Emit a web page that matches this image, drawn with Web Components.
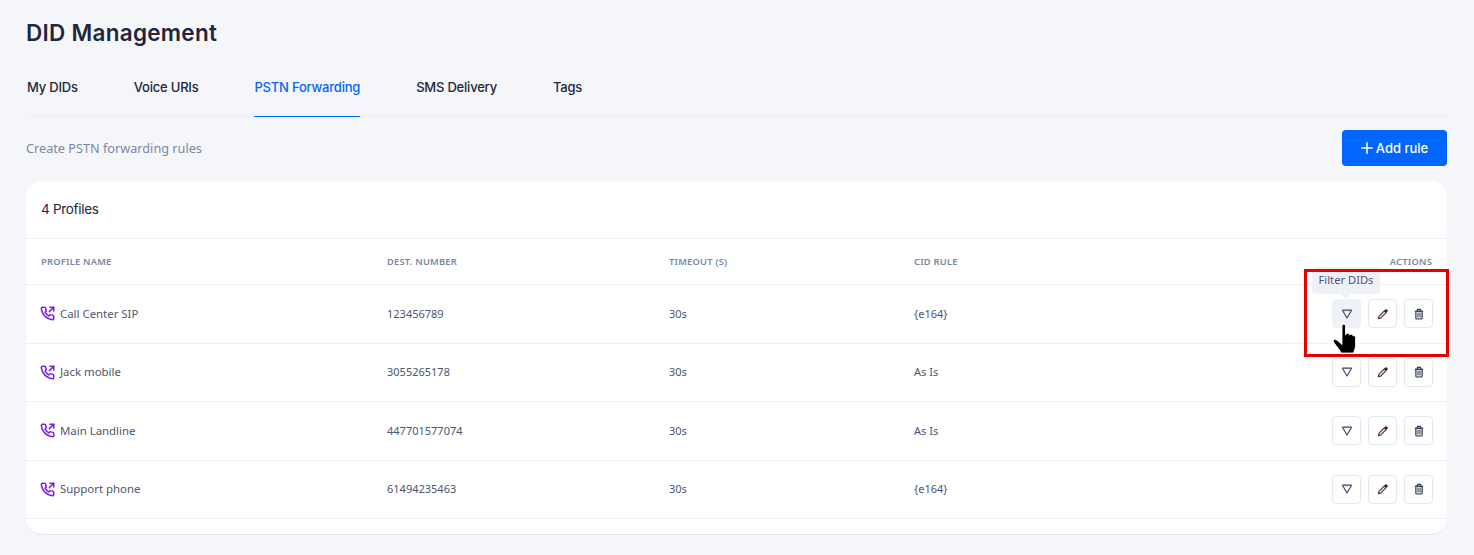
<!DOCTYPE html>
<html>
<head>
<meta charset="utf-8">
<title>DID Management</title>
<style>
html, body { margin: 0; padding: 0; background: #f5f6fa; }
body { font-family: "Noto Sans", sans-serif; width: 1474px; height: 555px; overflow: hidden; }
</style>
</head>
<body>
<did-page></did-page>

<script>
const ICONS = {
	call: `<svg width="15" height="15" viewBox="0 0 24 24" fill="none" stroke="#7c22e8" stroke-width="2.5" stroke-linecap="round" stroke-linejoin="round"><path d="M15 9l7-7"/><path d="M16 2h6v6"/><path d="M22 16.9v3a2 2 0 0 1-2.2 2 19.8 19.8 0 0 1-8.6-3.1 19.5 19.5 0 0 1-6-6A19.8 19.8 0 0 1 2.1 4.2 2 2 0 0 1 4.1 2h3a2 2 0 0 1 2 1.7c.1 1 .4 1.9.7 2.8a2 2 0 0 1-.5 2.1L8.1 9.9a16 16 0 0 0 6 6l1.3-1.3a2 2 0 0 1 2.1-.4c.9.3 1.8.6 2.8.7a2 2 0 0 1 1.7 2z"/></svg>`,
	filter: `<svg width="12" height="12" viewBox="0 0 12 12" fill="none" stroke="#3a4158" stroke-width="1.1" stroke-linejoin="round"><path d="M1.4 2.200h9.200L6 10z"/><path d="M1.600 2.300h8.800" stroke="#6b7285" stroke-width="1.600"/></svg>`,
	edit: `<svg width="12" height="12" viewBox="0 0 12 12"><path d="M1.400 10.600l.5-2.300 5.400-5.400 1.800 1.800-5.400 5.400z" fill="#eef0f5" stroke="#5a3040" stroke-width="1.200" stroke-linejoin="round"/><path d="M7.300 2.700l1.200-1.200a.9.9 0 0 1 1.300 0l.7.7a.9.9 0 0 1 0 1.300L9.300 4.700z" fill="#1c2540"/></svg>`,
	trash: `<svg width="12" height="12" viewBox="0 0 12 12" fill="none" stroke="#3a3f50" stroke-width="1.100" stroke-linejoin="round"><path d="M2.800 3.200h6.400v7a.8.8 0 0 1-.8.8H3.600a.8.8 0 0 1-.8-.8z" fill="#c9d3dc"/><path d="M1.800 3.200h8.400"/><path d="M4.400 3V1.400h3.200V3"/><path d="M5 5v4M7 5v4" stroke-width=".8"/></svg>`,
	hand: `<svg width="26" height="31" viewBox="0 0 26 31"><path d="M10 2.500c0-1.500 3.500-1.500 3.500 0V12l.5-1c.5-1 3-1 3.300.5l.2.5c.5-1 3-1 3.300.5l.2.5c.5-.6 2.500-.5 2.500 1.500V22c0 3-1 5-2 8H9C8 27 5 24 1.500 19c-1-1.500.5-3 2-2.500 2 .6 4.500 3.500 6.500 5z" fill="#000" stroke="#fff" stroke-width=".8"/></svg>`
};

class IconButton extends HTMLElement {
	connectedCallback() {
		const hover = this.hasAttribute('hover');
		this.attachShadow({ mode: 'open' });
		this.shadowRoot.innerHTML = `
		<style>
		:host { display: block; }
		.btn {
			width: 29px;
			height: 29px;
			box-sizing: border-box;
			border: 1px solid ${hover ? '#eef2f7' : '#e4e9f1'};
			border-radius: 4px;
			background: ${hover ? '#eef2f7' : '#fff'};
			display: flex;
			align-items: center;
			justify-content: center;
		}
		</style>
		<div class="btn">${ICONS[this.getAttribute('icon')]}</div>`;
	}
}

class ProfileRow extends HTMLElement {
	connectedCallback() {
		const hover = this.hasAttribute('hover') ? 'hover' : '';
		this.attachShadow({ mode: 'open' });
		this.shadowRoot.innerHTML = `
		<style>
		:host {
			display: grid;
			grid-template-columns: 346px 282px 245px 1fr;
			align-items: center;
			padding: 0 14px 1px 15px;
			border-bottom: 1px solid #edf0f5;
			font-size: 11px;
			line-height: 16px;
			color: #4d5670;
		}
		.name { display: flex; align-items: center; gap: 5.5px; margin-left: -1.5px; font-size: 11.4px; }
		.name svg { display: block; }
		.rest { display: flex; justify-content: space-between; align-items: center; }
		.actions { display: flex; justify-content: flex-end; gap: 7px; }
		</style>
		<div class="name">${ICONS.call}<span>${this.getAttribute('name')}</span></div>
		<div>${this.getAttribute('dest')}</div>
		<div>${this.getAttribute('timeout')}</div>
		<div class="rest">
			<span>${this.getAttribute('cid')}</span>
			<div class="actions">
				<icon-button icon="filter" ${hover}></icon-button>
				<icon-button icon="edit"></icon-button>
				<icon-button icon="trash"></icon-button>
			</div>
		</div>`;
	}
}

class ProfileTable extends HTMLElement {
	connectedCallback() {
		this.attachShadow({ mode: 'open' });
		this.shadowRoot.innerHTML = `
		<style>
		:host {
			display: block;
			height: 354px;
			box-sizing: border-box;
			background: #fff;
			border-radius: 16px;
			border-bottom: 1px solid #e2e6ee;
		}
		.count {
			height: 58px;
			box-sizing: border-box;
			padding: 0 15px 1px 15px;
			display: flex;
			align-items: center;
			font-family: "Inter", sans-serif;
			font-size: 13.5px;
			letter-spacing: -0.3px;
			color: #23263a;
			border-bottom: 1px solid #edf0f5;
		}
		.head {
			height: 46px;
			box-sizing: border-box;
			display: grid;
			grid-template-columns: 346px 282px 245px 1fr auto;
			align-items: center;
			padding: 0 15px;
			border-bottom: 1px solid #edf0f5;
			font-size: 9.4px;
			font-weight: 600;
			letter-spacing: 0.2px;
			color: #7b87a3;
		}
		.rows { display: grid; grid-template-rows: 59px 58px 59px 58px; }
		</style>
		<div class="count">4 Profiles</div>
		<div class="head">
			<span>PROFILE NAME</span><span>DEST. NUMBER</span><span>TIMEOUT (S)</span><span>CID RULE</span><span>ACTIONS</span>
		</div>
		<div class="rows"><slot></slot></div>`;
	}
}

class DidTabs extends HTMLElement {
	connectedCallback() {
		const tabs = ['My DIDs', 'Voice URIs', 'PSTN Forwarding', 'SMS Delivery', 'Tags'];
		const active = this.getAttribute('active');
		this.attachShadow({ mode: 'open' });
		this.shadowRoot.innerHTML = `
		<style>
		:host {
			display: flex;
			gap: 56px;
			height: 49px;
			box-sizing: border-box;
			padding-left: 1px;
			border-bottom: 1px solid #edeff4;
			font-family: "Inter", sans-serif;
			font-size: 13px;
			font-weight: 500;
			color: #23263a;
		}
		.tab { height: 49px; box-sizing: border-box; padding-top: 11px; white-space: nowrap; letter-spacing: -0.21px; }
		.tab.on { color: #0066ff; border-bottom: 1.5px solid #0066ff; }
		</style>
		${tabs.map(t => `<div class="tab ${t === active ? 'on' : ''}">${t}</div>`).join('')}`;
	}
}

class DidPage extends HTMLElement {
	connectedCallback() {
		this.attachShadow({ mode: 'open' });
		this.shadowRoot.innerHTML = `
		<style>
		:host {
			display: block;
			position: relative;
			box-sizing: border-box;
			width: 1474px;
			height: 555px;
			padding: 18px 27px 0 26px;
		}
		h1 {
			margin: 0 0 22px;
			height: 28px;
			line-height: 29px;
			font-family: "Inter", sans-serif;
			font-size: 22.5px;
			font-weight: 600;
			letter-spacing: 0.27px;
			color: #23263a;
		}
		.bar {
			height: 36px;
			margin: 13px 0 15px;
			display: flex;
			align-items: center;
			justify-content: space-between;
			font-size: 12.7px;
			color: #7b87a3;
		}
		.add {
			width: 105px;
			height: 36px;
			border-radius: 4px;
			background: #0066ff;
			color: #fff;
			display: flex;
			align-items: center;
			justify-content: center;
			gap: 3px;
			font-family: "Inter", sans-serif;
			font-size: 13px;
			font-weight: 500;
		}
		.tip {
			position: absolute;
			left: 1312px;
			top: 267px;
			width: 68px;
			height: 27px;
			box-sizing: border-box;
			background: #eef2f7;
			border-radius: 4px;
			font-size: 11.2px;
			line-height: 26px;
			text-align: center;
			color: #4d5670;
		}
		.tip::after {
			content: "";
			position: absolute;
			left: 29px;
			top: 27px;
			border: 5px solid transparent;
			border-top-color: #eef2f7;
			border-bottom: 0;
		}
		.mark {
			position: absolute;
			left: 1304px;
			top: 269px;
			width: 145px;
			height: 88px;
			box-sizing: border-box;
			border: 3px solid #e60000;
		}
		.hand { position: absolute; left: 1332px; top: 323px; display: block; }
		</style>
		<h1>DID Management</h1>
		<did-tabs active="PSTN Forwarding"></did-tabs>
		<div class="bar">
			<span>Create PSTN forwarding rules</span>
			<div class="add"><svg width="12" height="12" viewBox="0 0 12 12" stroke="#fff" stroke-width="1.5" stroke-linecap="round"><path d="M6 .8v10.400M.8 6h10.400"/></svg>Add rule</div>
		</div>
		<profile-table>
			<profile-row hover name="Call Center SIP" dest="123456789" timeout="30s" cid="{e164}"></profile-row>
			<profile-row name="Jack mobile" dest="3055265178" timeout="30s" cid="As Is"></profile-row>
			<profile-row name="Main Landline" dest="447701577074" timeout="30s" cid="As Is"></profile-row>
			<profile-row name="Support phone" dest="61494235463" timeout="30s" cid="{e164}"></profile-row>
		</profile-table>
		<div class="tip">Filter DIDs</div>
		<div class="mark"></div>
		<div class="hand">${ICONS.hand}</div>`;
	}
}

customElements.define('icon-button', IconButton);
customElements.define('profile-row', ProfileRow);
customElements.define('profile-table', ProfileTable);
customElements.define('did-tabs', DidTabs);
customElements.define('did-page', DidPage);
</script>
</body>
</html>
